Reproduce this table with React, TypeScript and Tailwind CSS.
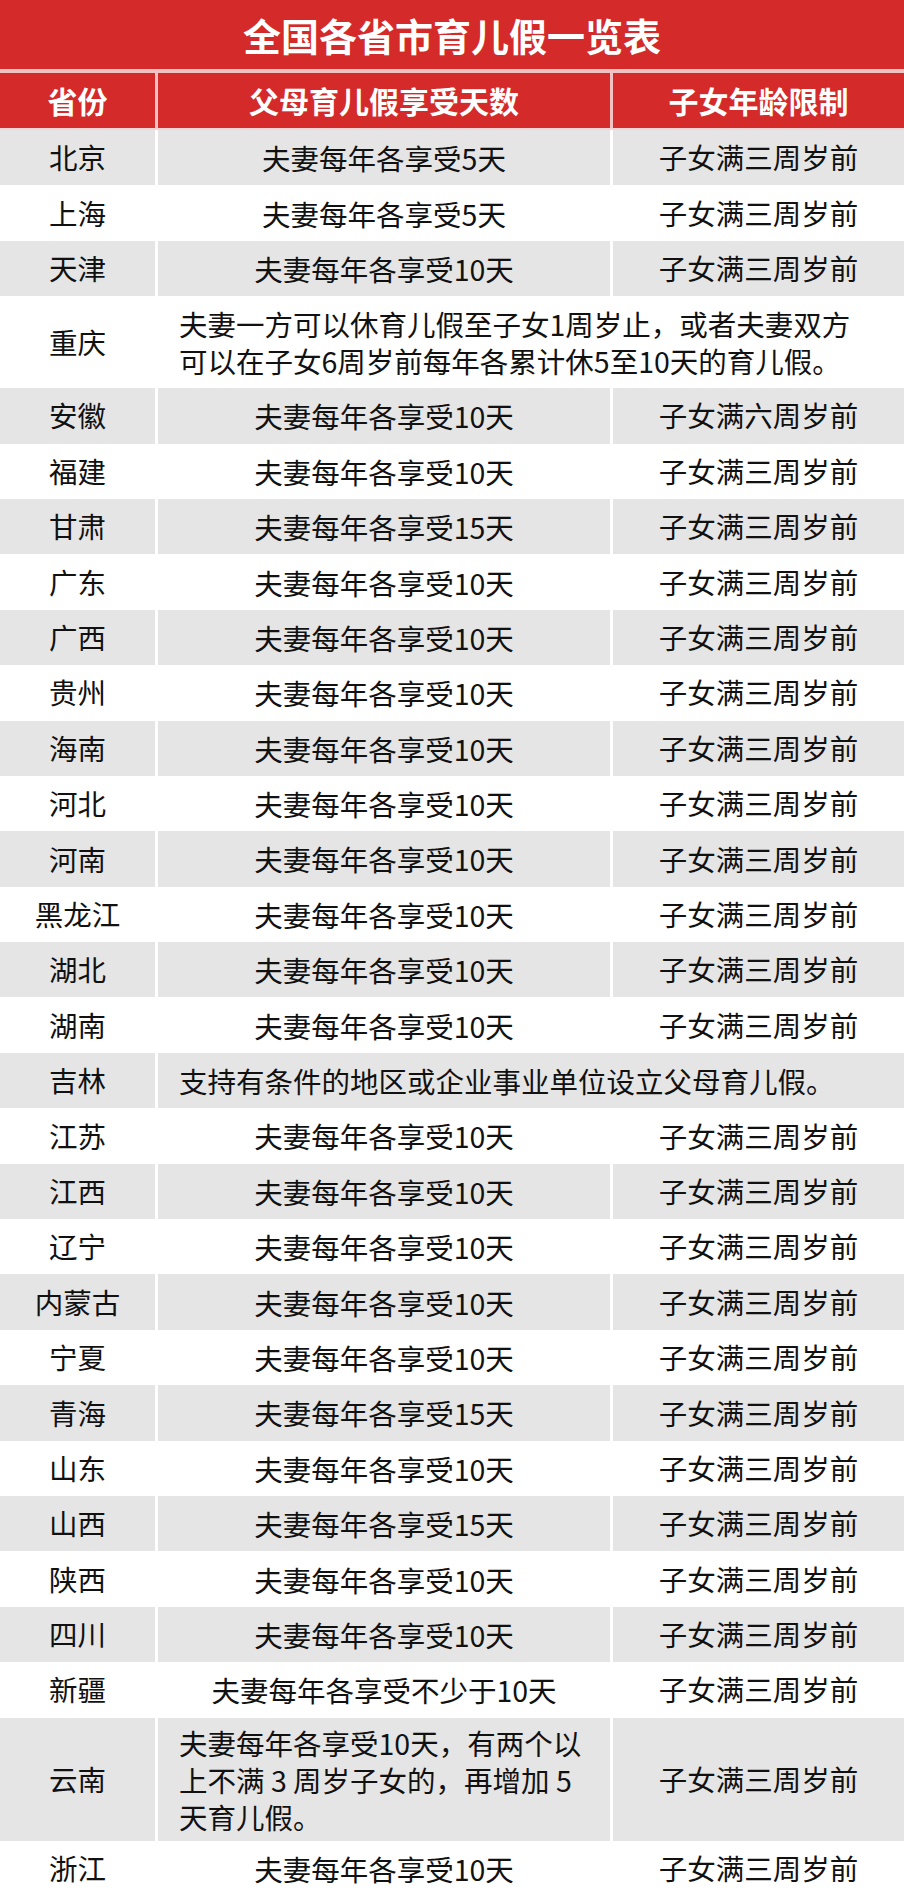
type Row = {
  name: string
  days: React.ReactNode
  age?: string
  span?: boolean
  left?: boolean
  h?: string
}

const std5 = '夫妻每年各享受5天'
const std10 = '夫妻每年各享受10天'
const std15 = '夫妻每年各享受15天'
const three = '子女满三周岁前'

const rows: Row[] = [
  { name: '北京', days: std5, age: three },
  { name: '上海', days: std5, age: three },
  { name: '天津', days: std10, age: three },
  {
    name: '重庆',
    days: (
      <>
        夫妻一方可以休育儿假至子女1周岁止，或者夫妻双方
        <br />
        可以在子女6周岁前每年各累计休5至10天的育儿假。
      </>
    ),
    span: true,
    left: true,
    h: 'h-[92px]',
  },
  { name: '安徽', days: std10, age: '子女满六周岁前' },
  { name: '福建', days: std10, age: three },
  { name: '甘肃', days: std15, age: three },
  { name: '广东', days: std10, age: three },
  { name: '广西', days: std10, age: three },
  { name: '贵州', days: std10, age: three },
  { name: '海南', days: std10, age: three },
  { name: '河北', days: std10, age: three },
  { name: '河南', days: std10, age: three },
  { name: '黑龙江', days: std10, age: three },
  { name: '湖北', days: std10, age: three },
  { name: '湖南', days: std10, age: three },
  { name: '吉林', days: '支持有条件的地区或企业事业单位设立父母育儿假。', span: true, left: true },
  { name: '江苏', days: std10, age: three },
  { name: '江西', days: std10, age: three },
  { name: '辽宁', days: std10, age: three },
  { name: '内蒙古', days: std10, age: three },
  { name: '宁夏', days: std10, age: three },
  { name: '青海', days: std15, age: three },
  { name: '山东', days: std10, age: three },
  { name: '山西', days: std15, age: three },
  { name: '陕西', days: std10, age: three },
  { name: '四川', days: std10, age: three },
  { name: '新疆', days: '夫妻每年各享受不少于10天', age: three },
  {
    name: '云南',
    days: (
      <>
        夫妻每年各享受10天，有两个以
        <br />
        上不满 3 周岁子女的，再增加 5
        <br />
        天育儿假。
      </>
    ),
    age: three,
    left: true,
    h: 'h-[123px]',
  },
  { name: '浙江', days: std10, age: three },
]

export default function App() {
  return (
    <div className="w-[904px] bg-white font-['Noto_Sans_CJK_SC',sans-serif] text-[#111]">
      <div className="h-[69px] bg-[#d42a2a] flex items-center justify-center text-white font-bold text-[38px] leading-none">
        全国各省市育儿假一览表
      </div>
      <div className="h-[4px] bg-[#f2c2c2]" />
      <div className="flex h-[55px] gap-[3px] bg-[#f2c2c2] text-white font-bold text-[30px]">
        <div className="w-[155px] bg-[#d42a2a] flex items-center justify-center">省份</div>
        <div className="w-[452px] bg-[#d42a2a] flex items-center justify-center">父母育儿假享受天数</div>
        <div className="flex-1 bg-[#d42a2a] flex items-center justify-center">子女年龄限制</div>
      </div>
      <div className="h-[2px] bg-[#f6d4d4]" />

      {rows.map((r, i) => {
        const cell = i % 2 === 0 ? 'bg-[#e5e5e5]' : 'bg-white'
        return (
          <div key={r.name} className={`flex gap-[3px] bg-white text-[28.5px] ${r.h ?? 'h-[55.4px]'}`}>
            <div className={`w-[155px] flex items-center justify-center ${cell}`}>{r.name}</div>
            {r.span ? (
              <div className={`flex-1 flex items-center px-[21px] leading-[37px] ${cell}`}>{r.days}</div>
            ) : (
              <>
                <div
                  className={`w-[452px] flex items-center leading-[37px] ${
                    r.left ? 'px-[21px]' : 'justify-center'
                  } ${cell}`}
                >
                  <div>{r.days}</div>
                </div>
                <div className={`flex-1 flex items-center justify-center ${cell}`}>{r.age}</div>
              </>
            )}
          </div>
        )
      })}
    </div>
  )
}
